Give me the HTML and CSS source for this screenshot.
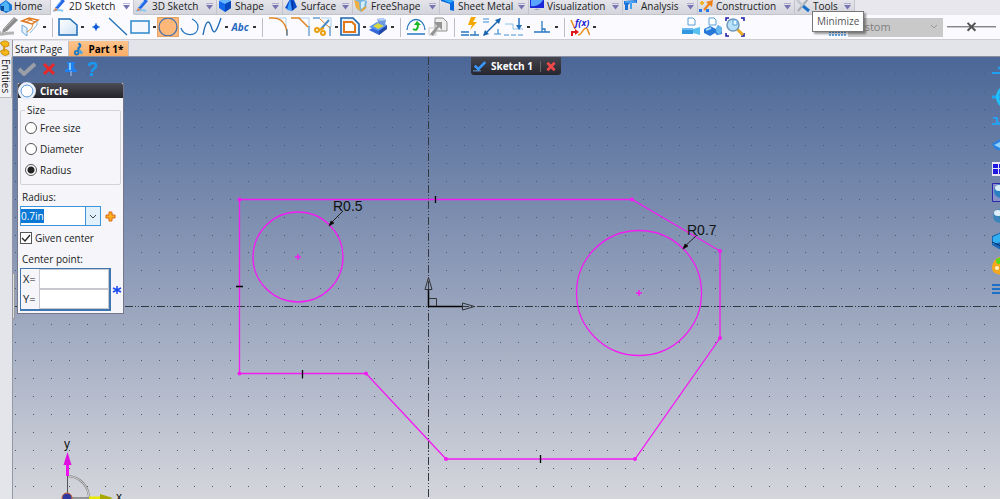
FILE: index.html
```
<!DOCTYPE html>
<html lang="en">
<head>
  <meta charset="UTF-8">
  <meta name="viewport" content="width=device-width, initial-scale=1.0">
  <title>Sketch 1 - Part 1</title>
  <link rel="stylesheet" href="styles.css">
</head>
<body>
  <!-- Ribbon tabs -->
  <nav class="ribbon">
    <button class="tab"><svg class="tab-icon" viewBox="0 0 14 14"><path d="M-1 6l7-5 6 5v5l-6 3-7-4z" fill="#1878d8"/><path d="M1 6l5-4 3 4v6H1z" fill="#54b4f8"/><path d="M1 7h3v5H1z" fill="#0c4c9c"/></svg><span>Home</span></button>
    <button class="tab active"><svg class="tab-icon" viewBox="0 0 14 14"><path d="M1 12q5-2 10 0" stroke="#8ac8f8" stroke-width="2" fill="none"/><path d="M3 9l7-9 3 2-7 8z" fill="#2468e8"/><path d="M4 8l5-6" stroke="#80c0ff"/><path d="M3 9l3 2-4 1z" fill="#e07840"/></svg><span>2D Sketch</span><i class="more"></i></button>
    <button class="tab"><svg class="tab-icon" viewBox="0 0 14 14"><path d="M1 12q5-2 10 0" stroke="#8ac8f8" stroke-width="2" fill="none"/><path d="M3 9l7-9 3 2-7 8z" fill="#2468e8"/><path d="M4 8l5-6" stroke="#80c0ff"/><path d="M3 9l3 2-4 1z" fill="#e07840"/></svg><span>3D Sketch</span><i class="more"></i></button>
    <button class="tab"><svg class="tab-icon" viewBox="0 0 14 14"><path d="M1 2l6-2 6 2v7l-6 4-6-4z" fill="#1468ec"/><path d="M1 2l6-2 6 2-6 3z" fill="#68b4ff"/><path d="M7 5v8l6-4V2z" fill="#0848bc"/></svg><span>Shape</span><i class="more"></i></button>
    <button class="tab"><svg class="tab-icon" viewBox="0 0 14 14"><path d="M1 9L6 0l4 1 3 7-5 4z" fill="#0a4ccc"/><path d="M6 0l2 12-5-1z" fill="#3c9cff"/><path d="M8 2l1 9" stroke="#082c90"/></svg><span>Surface</span><i class="more"></i></button>
    <button class="tab"><svg class="tab-icon" viewBox="0 0 14 14"><path d="M1 1l6-1 6 2-1 7-5 4-4-3z" fill="#78b4dc"/><path d="M0 1l5 2 1 9-4-3z" fill="#f0b040"/><path d="M7 3l4-1-1 6-3 2z" fill="#d4edf8"/><path d="M7 12l5-4" stroke="#e8a438" stroke-width="2"/></svg><span>FreeShape</span><i class="more"></i></button>
    <button class="tab"><svg class="tab-icon" viewBox="0 0 14 14"><path d="M0 0l4-1 9 3v10l-4-1V5L0 2z" fill="#0868e0"/><path d="M0 0l4-1 9 3-4 2z" fill="#30a8ff"/></svg><span>Sheet Metal</span><i class="more"></i></button>
    <button class="tab"><svg class="tab-icon" viewBox="0 0 14 14"><path d="M0 1h14v8H0z" fill="#1c28d8"/><path d="M1 1h12q-4 7-12 6z" fill="#58a4ff"/><path d="M4 11q3-3 6 0z" fill="#a0a8bc"/></svg><span>Visualization</span><i class="more"></i></button>
    <button class="tab"><svg class="tab-icon" viewBox="0 0 14 14"><path d="M0 2l13-1v3H6L4 6v5H1V6L0 5z" fill="#1870d8"/><path d="M6 3h2v7H6z" fill="#40a0f0"/><path d="M1 3h11" stroke="#70c4ff"/></svg><span>Analysis</span><i class="more"></i></button>
    <button class="tab"><svg class="tab-icon" viewBox="0 0 14 14"><path d="M5 11l6-7" stroke="#f08018" stroke-width="2"/><path d="M7 3l7-2-1 7z" fill="#f08018"/><path d="M3 2v4M1 4h4" stroke="#f0b428" stroke-width="2"/><path d="M0 10h3v3H0zM7 10h3v3H7z" fill="#2878e8"/></svg><span>Construction</span><i class="more"></i></button>
    <button class="tab"><svg class="tab-icon" viewBox="0 0 14 14"><path d="M12 0L2 12" stroke="#a8acb4" stroke-width="2"/><path d="M1 1l6 6" stroke="#c4c8d0" stroke-width="3"/><path d="M7 7l6 5" stroke="#1870c8" stroke-width="3"/></svg><span>Tools</span><i class="more"></i></button>
    <div class="tooltip" role="tooltip">Minimize</div>
  </nav>

  <!-- 2D sketch tools -->
  <div class="toolbar">
    <button class="tool" aria-label="Edit sketch"><svg viewBox="0 0 20 20"><path d="M2 14q-2 4 3 3t11-1" stroke="#b4b4b4" stroke-width="3" fill="none"/><path d="M5 12L16 0l4 3L9 14l-5 2z" fill="#8c8c8c"/><path d="M6 12L17 1" stroke="#b8b8b8" stroke-width="1"/></svg></button>
    <button class="tool" aria-label="Project"><svg viewBox="0 0 20 20"><path d="M2 4l7-3 9 2-6 4z" fill="#fff" stroke="#e07820" stroke-width="1.5"/><path d="M6 5l6-3M8 2l7 3" stroke="#e07820"/><path d="M2 8l5 3v8l-5-4z" fill="#e4f0fc" stroke="#70a8dc"/><path d="M13 7q0 5-6 8" fill="none" stroke="#e08838"/><path d="M17 4v4l-7 8" stroke="#88b8e0" fill="none"/></svg></button>
    <i class="caret"></i>
    <hr class="sep">
    <button class="tool" aria-label="Polyline"><svg viewBox="0 0 20 20"><defs><linearGradient id="pg" x2="1" y2="1"><stop stop-color="#fff"/><stop offset="1" stop-color="#cfe2f4"/></linearGradient></defs><path d="M1 2h11l7 6v10H1z" fill="url(#pg)" stroke="#1c6cb8" stroke-width="1.5"/></svg></button>
    <i class="caret"></i>
    <button class="tool" aria-label="Point"><svg viewBox="0 0 20 20"><path d="M6 10h8M10 6v8" stroke="#70a8e8" stroke-width="1.5"/><path d="M10 7l3 3-3 3-3-3z" fill="#1058d8"/></svg></button>
    <button class="tool" aria-label="Line"><svg viewBox="0 0 20 20"><path d="M1 1l18 17" stroke="#2070b8" stroke-width="1.3"/></svg></button>
    <button class="tool" aria-label="Rectangle"><svg viewBox="0 0 20 20"><path d="M1 4h18v12H1z" fill="#f4f8fd" stroke="#2a86cc" stroke-width="1.5"/></svg></button>
    <i class="caret"></i>
    <button class="tool selected" aria-label="Circle"><svg viewBox="0 0 20 20"><circle cx="10" cy="10" r="9" fill="none" stroke="#4474b0" stroke-width="1.3"/></svg></button>
    <button class="tool" aria-label="Arc"><svg viewBox="0 0 20 20"><path d="M1 11c2 9 17 9 17-1 0-3-2-6-6-8" fill="none" stroke="#2878c0" stroke-width="1.3"/></svg></button>
    <button class="tool" aria-label="Spline"><svg viewBox="0 0 20 20"><path d="M1 18C4 2 7 3 9 9c3 10 5 7 10-8" fill="none" stroke="#1c68b4" stroke-width="1.3"/></svg></button>
    <i class="caret"></i>
    <button class="tool abc">Abc</button>
    <i class="caret"></i>
    <hr class="sep">
    <button class="tool" aria-label="Fillet"><svg viewBox="0 0 20 20"><path d="M8 1h10v9" fill="none" stroke="#a8d0f0"/><path d="M1 1h4c8 0 14 6 14 17" fill="none" stroke="#e08424" stroke-width="1.5"/><path d="M19 12v7" stroke="#2878c0"/></svg></button>
    <button class="tool" aria-label="Chamfer"><svg viewBox="0 0 20 20"><path d="M8 1h11v9" fill="none" stroke="#a8d0f0"/><path d="M1 1h8l9 9" fill="none" stroke="#e08424" stroke-width="1.5"/><path d="M19 9v10" stroke="#2878c0"/></svg></button>
    <button class="tool" aria-label="Trim"><svg viewBox="0 0 20 20"><path d="M1 1h7M18 9v10" stroke="#2070b8"/><path d="M9 1h10v9" fill="none" stroke="#a8d0f0"/><path d="M8 2l10 9" stroke="#e08424"/><path d="M17 3L9 12" stroke="#488cc8" stroke-width="2"/><circle cx="5" cy="13" r="2" fill="none" stroke="#e8a010" stroke-width="2"/><circle cx="11" cy="16" r="2" fill="none" stroke="#e8a010" stroke-width="2"/><path d="M7 13l5-2" stroke="#e8a010" stroke-width="2"/></svg></button>
    <i class="caret"></i>
    <button class="tool" aria-label="Offset"><svg viewBox="0 0 20 20"><path d="M1 1h12l6 6v11H1z" fill="#e8f2fc" stroke="#1c64ac" stroke-width="1.6"/><path d="M4 5h8l3 3v7H4z" fill="#fff" stroke="#e47818" stroke-width="2"/></svg></button>
    <i class="caret"></i>
    <button class="tool" aria-label="Block"><svg viewBox="0 0 20 20"><path d="M1 13l8-5 10 3-8 7z" fill="#3468d8"/><path d="M1 10l8-5 10 3-8 6z" fill="#5a94f0"/><path d="M11 14l8-6v4l-8 6z" fill="#2048a8"/><path d="M5 9l5-3 6 3-6 3z" fill="#d8d840"/><path d="M9 2l6-1 3 2-1 5-6-1z" fill="#7098e0"/><path d="M9 2l6-1 3 2-6 1z" fill="#b8d0ff"/></svg></button>
    <i class="caret"></i>
    <hr class="sep">
    <button class="tool" aria-label="Update"><svg viewBox="0 0 20 20"><path d="M1 13C2-1 18-1 19 13" fill="none" stroke="#2878c0" stroke-width="1.3"/><path d="M1 17h18" stroke="#2878c0" stroke-width="1.5"/><path d="M7 12q5 3 5-5" fill="none" stroke="#18b820" stroke-width="2"/><path d="M8 8l3-4 4 4z" fill="#18b820"/></svg></button>
    <button class="tool" aria-label="Constraint check"><svg viewBox="0 0 20 20"><path d="M7 1h8l4 4v9H7z" fill="#eee" stroke="#909090"/><path d="M1 11h7v7H1z" fill="#fff" stroke="#c8c8c8"/><path d="M6 5h8v8l-3-3-6 9-3-2 7-8z" fill="#949494"/></svg></button>
    <hr class="sep">
    <button class="tool" aria-label="Auto constraint"><svg viewBox="0 0 20 20"><path d="M11 0h5l-3 5h4l-7 8 2-5H8z" fill="#f4a800"/><path d="M1 15h8M1 18h8M10 18h9M15 14v4" stroke="#2878c0" stroke-width="1.3"/></svg></button>
    <button class="tool" aria-label="Auto dimension"><svg viewBox="0 0 20 20"><path d="M1 2h6M1 5h6M12 17h7M16 12v5" stroke="#3c8cd0" stroke-width="1.2"/><path d="M2 18L18 2" stroke="#1864b0" stroke-width="1.5"/><path d="M1 19l2-6 4 4zM19 1l-6 2 4 4z" fill="#1864b0"/></svg></button>
    <button class="tool" aria-label="Dimension"><svg viewBox="0 0 20 20"><path d="M1 7h8v5h10" fill="none" stroke="#8cc0e8"/><path d="M0 18h20" stroke="#4890cc" stroke-dasharray="5 2"/><path d="M15 1v9" stroke="#2070c0" stroke-width="1.5"/><path d="M12 8h6l-3 5z" fill="#2070c0"/></svg></button>
    <i class="caret"></i>
    <button class="tool" aria-label="Perpendicular"><svg viewBox="0 0 20 20"><path d="M2 15h16M10 4v11M10 12h3v3" fill="none" stroke="#2878c0" stroke-width="1.3"/></svg></button>
    <i class="caret"></i>
    <hr class="sep">
    <button class="tool" aria-label="Equation curve"><svg viewBox="0 0 20 20"><path d="M1 3l4 9M8 18c4 0 5-7 8-7 2 0 2 5 4 7" fill="none" stroke="#e89020" stroke-width="1.6"/><path d="M2 19v-4h4" fill="none" stroke="#e01818" stroke-width="2"/><path d="M5 12l4 3-4 3z" fill="#e01818"/><text class="fx" x="5" y="9">f(x)</text></svg></button>
    <i class="caret"></i>
    <div class="view-tools">
      <button class="tool" aria-label="Look at"><svg viewBox="0 0 20 20"><path d="M7 1h5l2 2v5H7z" fill="#fff" stroke="#58a0d8"/><path d="M1 11h11v6H1z" fill="#3098e0"/><path d="M12 12l7-2v8l-7-2z" fill="#58c0f0"/><path d="M1 12h11" stroke="#a8e0ff"/></svg></button>
      <button class="tool" aria-label="Look at plane"><svg viewBox="0 0 20 20"><path d="M6 1h5l2 2v5H6z" fill="#fff" stroke="#58a0d8"/><path d="M1 12l6-3 6 3 2-4 4 3v6l-5 1-2-2-5 3-6-3z" fill="#2878d8"/><ellipse cx="16" cy="13" rx="3" ry="4" fill="#68b8f0"/><path d="M3 13l5-2" stroke="#a0d8ff" stroke-width="2"/></svg></button>
      <button class="tool" aria-label="Zoom all"><svg viewBox="0 0 20 20"><path d="M1 4V1h3M16 1h3v3M19 16v3h-3M4 19H1v-3" fill="none" stroke="#1818a8" stroke-width="1.5"/><path d="M12 12l6 6" stroke="#e8a828" stroke-width="3"/><circle cx="8" cy="8" r="6" fill="#b8e0f8" stroke="#7098b8" stroke-width="1.5"/><path d="M8 3h4v5H8z" fill="#e8f8ff" stroke="#58a0d8"/></svg></button>
    </div>
    <div class="style-tools">
      <svg class="style-icon" viewBox="0 0 20 20"><path d="M5 9h10l-5 5z" fill="#e8a820"/><path d="M1 12h5l4 3 4-3h5" stroke="#2868b0" fill="none"/><path d="M1 15h18M1 18h18" stroke="#60a8e8" stroke-width="2" stroke-dasharray="2 1"/></svg>
      <select class="style-select" aria-label="Line style" disabled><option>Custom</option></select>
      <button class="line-kind" aria-label="Line kind"><svg viewBox="0 0 50 20"><path d="M0 10h50" stroke="#505050"/><path d="M21 6l8 8M29 6l-8 8" stroke="#505050" stroke-width="2"/></svg></button>
    </div>
  </div>

  <div class="workspace">
    <aside class="sidebar">
      <svg class="tree-icon" viewBox="0 0 12 18"><path d="M0 3q5-4 9 0v3q-4 3-7 0zM0 12q5-4 9 0v3q-4 3-7 0z" fill="#f4b818" stroke="#c88808"/><path d="M4 6v6" stroke="#d89810" stroke-width="2"/></svg>
      <button class="side-tab">Entities</button>
    </aside>

    <main class="document">
      <div class="doc-tabs">
        <button class="doc-tab">Start Page</button>
        <button class="doc-tab current"><svg viewBox="0 0 12 14"><path d="M6 1q4 2 0 5v3" fill="none" stroke="#1878c8" stroke-width="2.5"/><circle cx="4" cy="11" r="2" fill="none" stroke="#1878c8" stroke-width="2"/><path d="M7 9l3 3" stroke="#48a8e8" stroke-width="3"/></svg>Part 1*</button>
      </div>

      <div class="viewport">
        <svg class="drawing" aria-label="Sketch drawing">
          <g transform="translate(-13 -57)">
            <path id="grid" class="grid"/>
            <path class="axis" d="M428.500 57V499M13 306.500H1000"/>
            <path class="profile" d="M239.500 199.500H632L720 251V338L635 459H446L366 373.500H239.500Z"/>
            <g class="vertex">
              <circle cx="239.500" cy="199.500" r="2"/><circle cx="632" cy="199.500" r="2"/><circle cx="720" cy="251" r="2"/><circle cx="720" cy="338" r="2"/>
              <circle cx="635" cy="459" r="2"/><circle cx="446" cy="459" r="2"/><circle cx="366" cy="373.500" r="2"/><circle cx="239.500" cy="373.500" r="2"/>
            </g>
            <circle class="profile" cx="298" cy="257" r="45"/>
            <circle class="profile" cx="639" cy="293" r="62.500"/>
            <path class="center" d="M295 257h6M298 254v6M636 293h6M639 290v6"/>
            <path class="tick" d="M435.500 196v7M236 286.500h7M302.500 370v8M540.500 455v8"/>
            <g class="dim">
              <path d="M343 211l-14 14M697 235l-14 13"/>
              <path class="head" d="M329 226l2-5 3 2zM683 249l2-5 3 2z"/>
              <text x="333" y="211">R0.5</text>
              <text x="687" y="235">R0.7</text>
            </g>
            <g class="origin">
              <path class="stem" d="M428.500 289V306.500H462"/>
              <path d="M429 298.500h7.500V306M425 289.500h7l-3.500-12zM462.500 303v7l12-3.500z"/>
            </g>
            <!-- view triad -->
            <path d="M67 476a22 22 0 0 1 22 22" fill="none" stroke="#777" stroke-width="2"/>
            <path d="M67 476a22 22 0 0 1 22 22" fill="none" stroke="#ddd"/>
            <path d="M67.500 475v23H90" fill="none" stroke="#555"/>
            <path d="M67.500 462v14" stroke="#f010f0" stroke-width="3"/>
            <path d="M67.500 452l4 13h-8z" fill="#e010e0"/>
            <path d="M89 498h12" stroke="#e8e800" stroke-width="3"/>
            <path d="M100 494l13 4-13 4z" fill="#a8a800"/>
            <circle cx="67" cy="498" r="5" fill="#3038a0" stroke="#d06830"/>
            <g class="triad-label"><text x="64" y="448">y</text><text x="116" y="501">x</text></g>
          </g>
        </svg>

        <div class="sketch-bar">
          <svg viewBox="0 0 16 12"><path d="M2 5l4 4 8-8" fill="none" stroke="#3898ff" stroke-width="3"/><path d="M0 11h9" stroke="#68b0f8"/></svg>
          <span>Sketch 1</span>
          <button aria-label="Close sketch"><svg viewBox="0 0 12 12"><path d="M2 2l8 8M10 2l-8 8" stroke="#f04848" stroke-width="3"/></svg></button>
        </div>

        <form class="command">
          <div class="command-actions">
            <button type="button" aria-label="OK"><svg viewBox="0 0 18 14"><path d="M1 7l5 5L17 2" fill="none" stroke="#9a9ea6" stroke-width="4"/></svg></button>
            <button type="button" aria-label="Cancel"><svg viewBox="0 0 18 14"><path d="M4 2l10 10M14 2L4 12" stroke="#e82828" stroke-width="3"/></svg></button>
            <button type="button" aria-label="Pin"><svg viewBox="0 0 18 14"><path d="M5 0h8v2l-1 1v3l3 2v2H3V8l3-2V3L5 2z" fill="#2080f0"/><path d="M8 1v7" stroke="#80c8ff" stroke-width="2"/><path d="M9 9v5" stroke="#a8c8f0"/></svg></button>
            <button type="button" aria-label="Help"><svg viewBox="0 0 18 14"><path d="M5 4c0-4 8-4 7 0 0 3-4 2-4 6" fill="none" stroke="#1898f0" stroke-width="2.5"/><path d="M6 11h3v3H6z" fill="#1898f0"/></svg></button>
          </div>
          <div class="panel">
            <div class="panel-title"><svg viewBox="0 0 18 18"><circle cx="9" cy="9" r="8" fill="#fff" stroke="#e8eef8" stroke-width="2"/><circle cx="9" cy="9" r="6" fill="#fff" stroke="#5090e0"/></svg>Circle</div>
            <div class="panel-body">
              <fieldset>
                <legend>Size</legend>
                <label><input type="radio" name="size">Free size</label>
                <label><input type="radio" name="size">Diameter</label>
                <label><input type="radio" name="size" checked>Radius</label>
              </fieldset>
              <label class="caption" for="radius">Radius:</label>
              <div class="row">
                <div class="combo">
                  <input type="text" id="radius" value="0.7in">
                  <button type="button" aria-label="Recent values"><svg viewBox="0 0 10 10"><path d="M2 4l3 3 3-3" fill="none" stroke="#444"/></svg></button>
                </div>
                <button type="button" class="add" aria-label="Add"><svg viewBox="0 0 12 12"><path d="M5 2h3v3h3v3H8v3H5V8H2V5h3z" fill="#ffb020" stroke="#d86818"/></svg></button>
              </div>
              <label class="check"><input type="checkbox" checked>Given center</label>
              <div class="caption">Center point:</div>
              <div class="row">
                <div class="coords">
                  <label for="cx">X=</label><input type="text" id="cx">
                  <label for="cy">Y=</label><input type="text" id="cy">
                </div>
                <svg class="required" viewBox="0 0 10 10"><path d="M5 1v8M1 3l8 4M9 3L1 7" stroke="#1848f0" stroke-width="1.5"/></svg>
              </div>
            </div>
          </div>
        </form>

        <div class="splitter"></div>

        <div class="view-strip">
          <button aria-label="Pan"><svg viewBox="0 0 20 20"><path d="M0 10h20M6 6l6-5v18" stroke="#20a0f0" stroke-width="2" fill="none"/></svg></button>
          <button aria-label="Rotate"><svg viewBox="0 0 20 20"><path d="M0 10h20" stroke="#18a8f8" stroke-width="3"/><path d="M9 2q-7 8 0 16" stroke="#20c0ff" stroke-width="3" fill="none"/></svg></button>
          <button aria-label="Look"><svg viewBox="0 0 20 20"><path d="M1 7h4v5h8M0 13h14" stroke="#28a0f0" stroke-width="2" fill="none"/></svg></button>
          <button aria-label="Home view"><svg viewBox="0 0 20 20"><path d="M0 9l8-5 8 5-6 7-7-2z" fill="#2880e0"/><path d="M2 10l6-3v6z" fill="#90d0ff"/></svg></button>
          <button aria-label="Viewports"><svg viewBox="0 0 20 20"><path d="M0 3h19v14H0z" fill="#e8e4f4"/><path d="M1 5h5v4H1zM7 5h9v4H7zM1 10h5v5H1zM7 10h9v5H7z" fill="#2018e0"/></svg></button>
          <button aria-label="Shaded"><svg viewBox="0 0 20 20"><path d="M.5 .5h19v18H.5z" fill="#8890c8" stroke="#2828a8"/><circle cx="9" cy="8" r="7" fill="#2880c0"/><ellipse cx="7" cy="5" rx="4" ry="3" fill="#d8ecfa"/></svg></button>
          <button aria-label="Wireframe"><svg viewBox="0 0 20 20"><circle cx="8" cy="9" r="7" fill="#3c84bc"/><ellipse cx="6" cy="6" rx="4" ry="3" fill="#e0f0fa"/></svg></button>
          <button aria-label="Section"><svg viewBox="0 0 20 20"><path d="M0 5l9-4 9 4v9l-9 5-9-5z" fill="#1868b8"/><path d="M1 6l8-4v9l-8 2z" fill="#30b0f0"/><path d="M0 11l9 4" stroke="#082868"/></svg></button>
          <button aria-label="Appearance"><svg viewBox="0 0 20 20"><path d="M0 13C0 6 7-2 16 4v12q-6 5-11 3-5-2-5-6z" fill="#f4a820"/><circle cx="7" cy="6" r="3" fill="#58d818"/><circle cx="5" cy="13" r="2" fill="#fff4c8"/></svg></button>
          <button aria-label="Layers"><svg viewBox="0 0 20 20"><path d="M0 6h20M0 10h20M0 14h20" stroke="#1c70c8" stroke-width="2"/></svg></button>
        </div>
      </div>
    </main>
  </div>

  <script src="sketch.js"></script>
</body>
</html>
```
FILE: styles.css
```
* {
  box-sizing: border-box;
}
body {
  margin: 0;
  height: 100vh;
  display: flex;
  flex-direction: column;
  overflow: hidden;
  font-family: "Open Sans", "Noto Sans", sans-serif;
  font-size: 10px;
  line-height: 14px;
  color: #222;
}
button {
  padding: 0;
  border: none;
  background: none;
  font: inherit;
  color: inherit;
}
svg {
  display: block;
}

/* Ribbon */
.ribbon {
  position: relative;
  display: grid;
  grid-template-columns: 51px 83px 83px 66px 70px 87px 89px 94px 75px 97px 60px;
  height: 15px;
  background: #e8e7ed;
}
.tab {
  display: flex;
  align-items: center;
  height: 15px;
  padding: 0 3px 2px 1px;
  gap: 3px;
  border-right: 1px solid #c4c4cc;
  border-bottom: 1px solid #c4c4cc;
  background: linear-gradient(#e4e4ea, #d4d4dc);
  white-space: nowrap;
}
.tab:first-child {
  padding-left: 0;
  gap: 0;
}
.tab.active {
  background: #fbfbff;
  border-bottom-color: #fbfbff;
}
.tab-icon {
  width: 14px;
  height: 14px;
  flex: none;
}
.more {
  width: 7px;
  height: 7px;
  margin-left: auto;
  background: #7874b4;
  clip-path: polygon(0 0, 100% 0, 100% 14%, 0 14%, 0 35%, 100% 35%, 50% 100%, 0 35%);
}
.tooltip {
  position: absolute;
  z-index: 5;
  left: 812px;
  top: 11px;
  padding: 2px 4px 3px;
  border: 1px solid #777;
  background: #fff;
  color: #555;
  box-shadow: 2px 2px 2px rgba(0, 0, 0, .4);
}

/* Toolbar */
.toolbar {
  display: flex;
  align-items: center;
  height: 25px;
  margin-left: -3px;
  background: #fbfbff;
  border-bottom: 1px solid #ccccd2;
}
.tool {
  flex: none;
  width: 22px;
  height: 20px;
  padding: 0 1px;
}
.tool svg {
  width: 20px;
  height: 20px;
}
.tool.selected {
  background: #fcb779;
  outline: 1px solid #e8a468;
  outline-offset: -1px;
}
.tool.abc {
  color: #2468c0;
  font-weight: bold;
  font-style: italic;
}
.fx {
  font: italic bold 9px "Open Sans", sans-serif;
  fill: #2020d0;
}
.caret {
  flex: none;
  width: 6px;
  height: 2px;
  border-left: 2px solid transparent;
  border-right: 1px solid transparent;
  background: #333;
  background-clip: padding-box;
}
.sep {
  flex: none;
  width: 1px;
  height: 19px;
  margin: 0 4px 0 5px;
  border: none;
  background: #bdbdc4;
}
.view-tools {
  display: flex;
  margin-left: 83px;
}
.style-tools {
  display: flex;
  align-items: center;
  flex: 1;
  margin-left: 82px;
}
.style-icon {
  width: 20px;
  height: 20px;
}
.style-select {
  appearance: none;
  width: 95px;
  height: 19px;
  padding: 0 3px;
  border: none;
  border-radius: 0;
  background: #c9c9c9 url("data:image/svg+xml,%3Csvg xmlns='http://www.w3.org/2000/svg' viewBox='0 0 8 8'%3E%3Cpath d='M1 2l3 3 3-3' fill='none' stroke='%23999'/%3E%3C/svg%3E") no-repeat right 5px center / 8px 8px;
  font: inherit;
  font-size: 11px;
  color: #808080;
  opacity: 1;
}
.line-kind {
  width: 49px;
  margin-left: 4px;
}

/* Workspace */
.workspace {
  display: flex;
  flex: 1;
  min-height: 0;
}
.sidebar {
  width: 13px;
  background: #e4e5ea;
  border-right: 1px solid #9498a4;
}
.tree-icon {
  width: 12px;
  height: 17px;
}
.side-tab {
  width: 12px;
  height: 41px;
  padding-top: 2px;
  border-right: 1px solid #bbb;
  border-bottom: 1px solid #bbb;
  background: #f2f2f6;
  writing-mode: vertical-rl;
  line-height: 11px;
  text-align: left;
}
.document {
  display: flex;
  flex: 1;
  flex-direction: column;
  min-width: 0;
}
.doc-tabs {
  display: flex;
  align-items: flex-end;
  height: 17px;
  background: #e3e4e9;
  border-bottom: 1px solid #8a8e9c;
}
.doc-tab {
  display: flex;
  align-items: center;
  height: 15px;
  padding: 0 6px 0 2px;
  border-right: 1px solid #c0c0c8;
  background: #f4f4f8;
}
.doc-tab.current {
  padding: 0 5px 0 4px;
  gap: 4px;
  background: linear-gradient(#fdc48c, #fbad66);
  font-weight: bold;
  color: #000;
}
.doc-tab svg {
  width: 11px;
  height: 14px;
}

/* Viewport */
.viewport {
  position: relative;
  flex: 1;
  min-height: 0;
  overflow: hidden;
  background: linear-gradient(#4b6797, #909db9 50%, #d5d6dc);
}
.drawing {
  position: absolute;
  width: 100%;
  height: 100%;
}
.grid {
  fill: #4c5870;
  shape-rendering: crispEdges;
}
.axis {
  fill: none;
  stroke: #333840;
  stroke-dasharray: 8 2 1 2 1 2;
}
.profile {
  fill: none;
  stroke: #f21cf2;
  stroke-width: 1.3;
}
.vertex {
  fill: #f21cf2;
}
.center {
  stroke: #f21cf2;
  stroke-width: 1.5;
}
.tick {
  stroke: #000;
  stroke-width: 1.3;
}
.dim {
  stroke: #222;
}
.dim .head {
  fill: #000;
}
.dim text {
  font: 14px "Liberation Sans", Arial, sans-serif;
  fill: #111;
  stroke: none;
}
.origin {
  fill: none;
  stroke: #333;
}
.origin .stem {
  stroke: #000;
  stroke-width: 1.5;
}
.triad-label {
  font: 12px "Liberation Sans", Arial, sans-serif;
  fill: #111;
}
.sketch-bar {
  position: absolute;
  left: 458px;
  top: 0;
  display: flex;
  align-items: center;
  height: 18px;
  padding-left: 2px;
  gap: 4px;
  border-radius: 0 0 3px 3px;
  background: linear-gradient(#44444e, #26262e);
  font-weight: bold;
  color: #fff;
}
.sketch-bar svg {
  width: 14px;
  height: 11px;
}
.sketch-bar button {
  margin-left: 3px;
  padding: 0 3px;
  border-left: 1px solid #666;
}

/* Command panel */
.command {
  position: relative;
  width: 107px;
  margin-left: 4px;
}
.command-actions {
  display: flex;
  align-items: flex-start;
  gap: 4px;
  height: 26px;
  padding: 5px 0 0 1px;
}
.command-actions svg {
  width: 18px;
  height: 14px;
}
.panel {
  border: 1px solid #74788a;
  border-top: none;
  background: #f5f5fa;
}
.panel-title {
  display: flex;
  align-items: center;
  height: 15px;
  gap: 4px;
  border-radius: 2px 2px 0 0;
  background: linear-gradient(#4c4c56, #24242c);
  font-weight: bold;
  color: #fff;
}
.panel-title svg {
  width: 18px;
  height: 18px;
}
.panel-body {
  padding: 5px 2px 2px;
}
fieldset {
  display: grid;
  gap: 7px;
  margin: 0 0 5px;
  padding: 4px 3px 7px 4px;
  border: 1px solid #d2d2d8;
  border-radius: 2px;
}
legend {
  padding: 0 2px;
}
fieldset label,
.check {
  display: flex;
  align-items: center;
  gap: 3px;
}
fieldset input,
.check input {
  appearance: none;
  width: 12px;
  height: 12px;
  margin: 0;
  border: 1px solid #555;
  background: #fff;
}
fieldset input {
  border-radius: 50%;
}
fieldset input:checked {
  background: radial-gradient(circle, #222 3px, #fff 4px);
}
.check {
  margin: 5px 0 7px;
}
.check input:checked {
  background: #fff url("data:image/svg+xml,%3Csvg xmlns='http://www.w3.org/2000/svg' viewBox='0 0 10 10'%3E%3Cpath d='M1 5l3 3 5-6' fill='none' stroke='%23222' stroke-width='1.3'/%3E%3C/svg%3E");
}
.caption {
  display: block;
  padding: 0 2px;
  margin-bottom: 2px;
}
.row {
  display: flex;
  align-items: center;
  gap: 3px;
}
input[type="text"] {
  min-width: 0;
  padding: 0;
  border: none;
  outline: none;
  border-radius: 0;
  background: #fff;
  font: inherit;
  color: #222;
}
::selection {
  background: #0a78d4;
  color: #fff;
}
.combo {
  display: flex;
  width: 81px;
  height: 20px;
  border: 1px solid #3c94dc;
  background: #fff;
}
.combo input {
  flex: 1;
}
.combo button {
  width: 15px;
  border-left: 1px solid #3c94dc;
  background: #e2f0fa;
}
.combo svg {
  width: 10px;
  height: 10px;
  margin: auto;
}
.add svg {
  width: 12px;
  height: 12px;
}
.coords {
  display: grid;
  grid-template-columns: 18px 1fr;
  flex: none;
  align-items: center;
  width: 91px;
  border: 2px solid #3f76b0;
  border-width: 1px 2px 2px 1px;
}
.coords label {
  padding-left: 2px;
  font-size: 11px;
}
.coords input {
  height: 20px;
  border: 1px solid #c8c8ce;
}
.required {
  flex: none;
  width: 10px;
  height: 10px;
  margin-left: -2px;
}
.splitter {
  position: absolute;
  left: -1px;
  top: 216px;
  width: 3px;
  height: 46px;
  border: 1px solid #999;
  background: #ddd;
}
.view-strip {
  position: absolute;
  right: 0;
  top: 6px;
  width: 8px;
  display: flex;
  flex-direction: column;
  align-items: flex-start;
  gap: 4px;
  overflow: hidden;
}
.view-strip svg {
  width: 20px;
  height: 20px;
}
```
FILE: sketch.js
```
// Snap grid dots
const STEP = 17.95;
let d = '';
for (let y = 73; y < window.innerHeight; y += STEP) {
  for (let x = 15; x < window.innerWidth; x += STEP) {
    d += `M${Math.round(x)} ${Math.round(y)}h1v1h-1z`;
  }
}
document.getElementById('grid').setAttribute('d', d);

// Radius is ready to be typed over
const radius = document.getElementById('radius');
radius.focus();
radius.select();
```
